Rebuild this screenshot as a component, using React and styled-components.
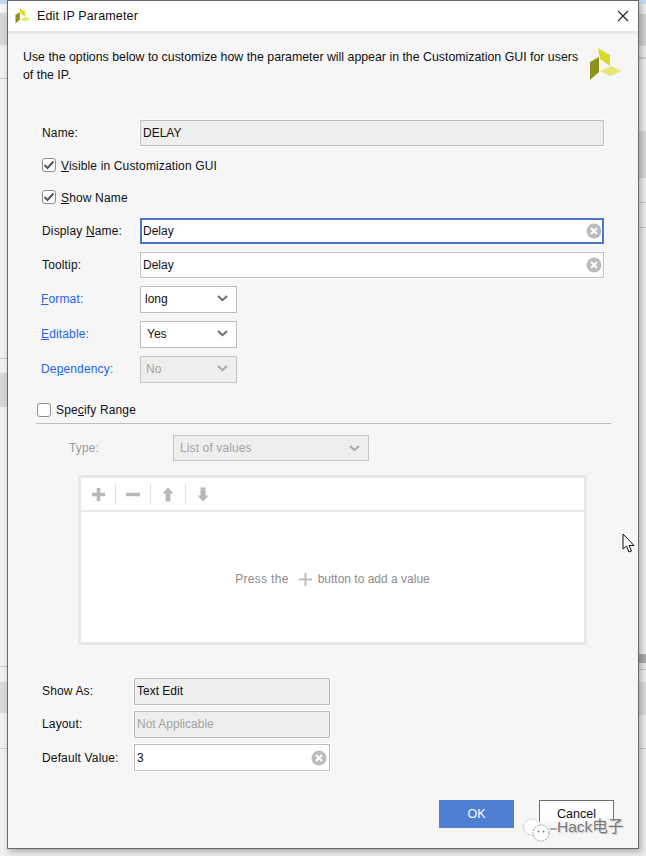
import React from 'react'
import styled, { createGlobalStyle } from 'styled-components'

const Global = createGlobalStyle`
  html, body { margin: 0; padding: 0; background: #efefef; }
  * { box-sizing: border-box; }
`

const Page = styled.div`
  position: relative;
  width: 646px;
  height: 856px;
  overflow: hidden;
  display: flex;
  font-family: "Liberation Sans", Arial, sans-serif;
  font-size: 12px;
  color: #111;
`
const LeftStrip = styled.div`
  width: 7px;
  background: linear-gradient(to bottom,
    #c9d6ee 0 4px, #f4f4f4 4px 13px, #d6d6d6 13px 45px, #f0f0f0 45px 78px, #cfcfcf 78px 79px,
    #f0f0f0 79px 358px, #cfcfcf 358px 359px, #f0f0f0 359px 373px, #d6d6d6 373px 407px,
    #f0f0f0 407px 666px, #cfcfcf 666px 667px, #f0f0f0 667px 682px, #d8d8d8 682px 713px,
    #f0f0f0 713px 748px, #cfcfcf 748px 749px, #f0f0f0 749px 856px);
`
const RightStrip = styled.div`
  flex: 1;
  background: linear-gradient(to bottom,
    #c9d6ee 0 4px, #ececec 4px 14px, #d0d0d0 14px 46px, #e8e8e8 46px 57px, #cfcfcf 57px 59px,
    #ececec 59px 131px, #d4d4d4 131px 178px, #ececec 178px 202px, #c8c8c8 202px 203px,
    #ececec 203px 227px, #c8c8c8 227px 228px, #ececec 228px 654px, #ababab 654px 663px,
    #e8e8e8 663px 669px, #c4c4c4 669px 670px, #ececec 670px 682px, #d8d8d8 682px 715px,
    #ececec 715px 748px, #c8c8c8 748px 749px, #ececec 749px 856px);
`
const Dialog = styled.div`
  width: 632px;
  height: 849px;
  background: #f6f6f6;
  border: 1px solid #6a6a6a;
  box-shadow: 2px 3px 6px rgba(0, 0, 0, 0.28);
  display: flex;
  flex-direction: column;
  position: relative;
`
const TitleBar = styled.div`
  height: 33px;
  flex-shrink: 0;
  background: #fff;
  border-bottom: 3px solid #e8e8e8;
  display: flex;
  align-items: center;
  justify-content: space-between;
  padding: 0 9px 0 7px;
  font-size: 12.5px;
  letter-spacing: 0.15px;
`
const TitleLeft = styled.div`
  display: flex;
  align-items: center;
  gap: 6px;
`
const Intro = styled.div`
  height: 86px;
  flex-shrink: 0;
  display: flex;
  justify-content: space-between;
  align-items: flex-start;
  padding: 14px 16px 0 15px;
`
const IntroText = styled.p`
  margin: 0;
  width: 565px;
  font-size: 12.35px;
  line-height: 18px;
`
const Form = styled.div`
  padding-left: 34px;
  display: flex;
  flex-direction: column;
`
const Row = styled.div`
  display: flex;
  align-items: center;
  margin-top: ${p => p.$top || 0}px;
`
const Label = styled.div`
  width: ${p => p.$w || 98}px;
  flex-shrink: 0;
  white-space: nowrap;
  color: ${p => p.$disabled ? '#9a9a9a' : p.$link ? '#2463e6' : '#111'};
  margin-left: ${p => p.$link ? -1 : 0}px;
  padding-bottom: ${p => p.$lift ? 2 : 0}px;
  font-size: 12px;
  letter-spacing: 0.15px;
`
const Field = styled.div`
  width: ${p => p.$w}px;
  height: ${p => p.$h || 26}px;
  display: flex;
  align-items: center;
  padding: 0 3px ${p => p.$lift ? 2 : 0}px ${p => p.$focus ? 1 : 2}px;
  background: ${p => p.$off ? '#eeeeee' : '#fff'};
  color: ${p => p.$dim ? '#a3a3a3' : '#111'};
  border: ${p => p.$focus ? '2px solid #4a78c8' : '1px solid #bdbdbd'};
  outline: ${p => p.$focus ? 'none' : '1px solid #fff'};
  font-size: 12px;
`
const ClearSlot = styled.span`
  margin-left: auto;
  display: flex;
  margin-right: ${p => p.$nudge || 0}px;
`
const Select = styled.div`
  width: ${p => p.$w}px;
  height: ${p => p.$h || 27}px;
  display: flex;
  align-items: center;
  justify-content: space-between;
  padding: 0 8px ${p => p.$h ? 0 : 2}px ${p => p.$pad || 5}px;
  background: ${p => p.$off ? '#eeeeee' : '#fff'};
  color: ${p => p.$off ? '#a3a3a3' : '#111'};
  border: 1px solid ${p => p.$off ? '#c4c4c4' : '#bdbdbd'};
  font-size: 12px;
  letter-spacing: ${p => p.$spaced ? 0.12 : 0}px;
`
const CheckRow = styled.div`
  display: flex;
  align-items: center;
  gap: 5px;
  height: 16px;
  margin-top: ${p => p.$top || 0}px;
  margin-left: ${p => p.$indent || 0}px;
  font-size: 12px;
  letter-spacing: 0.15px;
`
const CheckText = styled.span`
  padding-top: ${p => p.$drop ? 2 : 0}px;
`
const Box = styled.span`
  width: 14px;
  height: 14px;
  background: #fff;
  border: 1px solid #8d8d8d;
  border-radius: 3px;
  display: flex;
  align-items: center;
  justify-content: center;
`
const Divider = styled.div`
  width: 575px;
  height: 1px;
  background: #bdbdbd;
  margin: 5px 0 0 28px;
`
const RangeBlock = styled.div`
  padding-left: 61px;
`
const ValueTable = styled.div`
  width: 509px;
  height: 170px;
  margin: 14px 0 0 9px;
  border: 3px solid #e8e8e8;
  background: #fff;
  display: flex;
  flex-direction: column;
`
const Toolbar = styled.div`
  height: 34px;
  flex-shrink: 0;
  border-bottom: 2px solid #e8e8e8;
  display: flex;
  align-items: center;
`
const ToolSlot = styled.span`
  width: 35px;
  height: 20px;
  display: flex;
  align-items: center;
  justify-content: center;
  padding-right: ${p => p.$last ? 2 : 0}px;
  border-right: ${p => p.$last ? 'none' : '1px solid #dcdcdc'};
`
const Empty = styled.div`
  flex: 1;
  display: flex;
  align-items: center;
  justify-content: center;
  gap: 9px;
  padding-top: 4px;
  color: #8c8c8c;
  font-size: 12px;
`
const PressText = styled.span`
  letter-spacing: 0.3px;
`
const HintPlus = styled.span`
  display: flex;
  margin-right: -4px;
`
const Bottom = styled.div`
  margin: 33px 0 0 34px;
  display: flex;
  flex-direction: column;
  gap: 6px;
`
const Footer = styled.div`
  display: flex;
  justify-content: flex-end;
  gap: 25px;
  margin: 29px 24px 0 0;
`
const Button = styled.div`
  width: 75px;
  height: 28px;
  display: flex;
  align-items: center;
  justify-content: center;
  background: ${p => p.$primary ? '#4f7fd2' : '#fff'};
  color: ${p => p.$primary ? '#fff' : '#111'};
  border: ${p => p.$primary ? 'none' : '1px solid #6f6f6f'};
  font-size: 12.5px;
`
const Watermark = styled.div`
  position: absolute;
  left: 523px;
  top: 817px;
  width: 106px;
  height: 25px;
  display: flex;
  align-items: center;
  background: linear-gradient(to bottom, transparent 0 4px, #f6f6f6 5px);
  color: #777;
  font-family: "Liberation Sans", "Noto Sans CJK SC", sans-serif;
  font-size: 15.5px;
  line-height: 18px;
  white-space: nowrap;
  text-shadow: 0 0 2px #fff, 1px 1px 1px #bbb;
`
const WaterText = styled.span`
  padding-bottom: 5px;
`
const Cursor = styled.svg`
  position: absolute;
  left: 622px;
  top: 533px;
`

const Logo = ({ size }) => (
  <svg width={size} height={size} viewBox="0 0 33 33">
    <polygon points="9,0 21,7 21,18 11,11" fill="#d6dc2e" />
    <polygon points="1,14 10,9 10,24 1,32" fill="#8f9216" />
    <polygon points="22.5,18 32.5,23 21,28 11,23" fill="#e4e772" />
  </svg>
)
const Close = () => (
  <svg width="12" height="12" viewBox="0 0 12 12">
    <path d="M1 1L11 11M11 1L1 11" stroke="#222" strokeWidth="1.1" fill="none" />
  </svg>
)
const Clear = () => (
  <svg width="16" height="16" viewBox="0 0 16 16">
    <circle cx="8" cy="8" r="7.5" fill="#bcbcbc" />
    <path d="M5 5L11 11M11 5L5 11" stroke="#fff" strokeWidth="2" fill="none" />
  </svg>
)
const Chevron = ({ off }) => (
  <svg width="11" height="7" viewBox="0 0 11 7">
    <path d="M1 1L5.5 5.2L10 1" stroke={off ? '#a8a8a8' : '#6e6e6e'} strokeWidth="2" fill="none" />
  </svg>
)
const Check = () => (
  <svg width="12" height="10" viewBox="0 0 12 10">
    <path d="M1.5 5L4.5 8L10.5 1.5" stroke="#555" strokeWidth="2" fill="none" />
  </svg>
)
const Plus = ({ color = '#b8b8b8', w = 3.5 }) => (
  <svg width="15" height="15" viewBox="0 0 15 15">
    <path d="M7.5 1V14M1 7.5H14" stroke={color} strokeWidth={w} fill="none" />
  </svg>
)
const Minus = () => (
  <svg width="15" height="15" viewBox="0 0 15 15">
    <path d="M0 7.5H14" stroke="#b8b8b8" strokeWidth="3.5" fill="none" />
  </svg>
)
const ArrowUp = () => (
  <svg width="12" height="15" viewBox="0 0 12 15">
    <path d="M6 0.5L11.5 6.5H8.5V14.5H3.5V6.5H0.5Z" fill="#b8b8b8" />
  </svg>
)
const ArrowDown = () => (
  <svg width="12" height="15" viewBox="0 0 12 15">
    <path d="M6 14.5L11.5 8.5H8.5V0.5H3.5V8.5H0.5Z" fill="#b8b8b8" />
  </svg>
)
const WeChat = () => (
  <svg width="34" height="24" viewBox="0 0 34 24">
    <ellipse cx="9" cy="9" rx="8.5" ry="8" fill="#fff" stroke="#aaa" strokeWidth="0.7" strokeDasharray="2 1" />
    <ellipse cx="18" cy="15" rx="8" ry="8" fill="#fff" stroke="#888" strokeWidth="0.8" strokeDasharray="2 1" />
    <circle cx="15.5" cy="13.5" r="0.9" fill="#777" />
    <circle cx="20.5" cy="13.5" r="0.9" fill="#777" />
    <path d="M27 11H34" stroke="#777" strokeWidth="1.2" />
  </svg>
)

const App = () => (
  <Page>
    <Global />
    <LeftStrip />
    <Dialog>
      <TitleBar>
        <TitleLeft>
          <Logo size={16} />
          <span>Edit IP Parameter</span>
        </TitleLeft>
        <Close />
      </TitleBar>
      <Intro>
        <IntroText>Use the options below to customize how the parameter will appear in the Customization GUI for users of the IP.</IntroText>
        <Logo size={33} />
      </Intro>
      <Form>
        <Row>
          <Label>Name:</Label>
          <Field $w={464} $off>DELAY</Field>
        </Row>
        <CheckRow $top={11}>
          <Box><Check /></Box>
          <CheckText $drop><u>V</u>isible in Customization GUI</CheckText>
        </CheckRow>
        <CheckRow $top={16}>
          <Box><Check /></Box>
          <CheckText $drop><u>S</u>how Name</CheckText>
        </CheckRow>
        <Row $top={13}>
          <Label>Display <u>N</u>ame:</Label>
          <Field $w={464} $focus>Delay<ClearSlot $nudge={-3}><Clear /></ClearSlot></Field>
        </Row>
        <Row $top={8}>
          <Label>Tooltip:</Label>
          <Field $w={464}>Delay<ClearSlot $nudge={-2}><Clear /></ClearSlot></Field>
        </Row>
        <Row $top={8}>
          <Label $link $lift $w={99}><u>F</u>ormat:</Label>
          <Select $w={97} $pad={4}>long<Chevron /></Select>
        </Row>
        <Row $top={8}>
          <Label $link $lift $w={99}><u>E</u>ditable:</Label>
          <Select $w={97} $pad={6}>Yes<Chevron /></Select>
        </Row>
        <Row $top={8}>
          <Label $link $lift $w={99}>De<u>p</u>endency:</Label>
          <Select $w={97} $off>No<Chevron off /></Select>
        </Row>
      </Form>
      <CheckRow $top={19} $indent={29}>
        <Box />
        <CheckText>Spe<u>c</u>ify Range</CheckText>
      </CheckRow>
      <Divider />
      <RangeBlock>
        <Row $top={11}>
          <Label $disabled $w={104}>Type:</Label>
          <Select $w={196} $h={26} $pad={6} $spaced $off>List of values<Chevron off /></Select>
        </Row>
        <ValueTable>
          <Toolbar>
            <ToolSlot><Plus /></ToolSlot>
            <ToolSlot><Minus /></ToolSlot>
            <ToolSlot><ArrowUp /></ToolSlot>
            <ToolSlot $last><ArrowDown /></ToolSlot>
          </Toolbar>
          <Empty>
            <PressText>Press the</PressText>
            <HintPlus><Plus color="#bdbdbd" w={2} /></HintPlus>
            <span>button to add a value</span>
          </Empty>
        </ValueTable>
      </RangeBlock>
      <Bottom>
        <Row>
          <Label $lift $w={92}>Show As:</Label>
          <Field $w={196} $h={27} $off $lift>Text Edit</Field>
        </Row>
        <Row>
          <Label $lift $w={92}>Layout:</Label>
          <Field $w={196} $h={27} $off $dim $lift>Not Applicable</Field>
        </Row>
        <Row>
          <Label $w={92}>Default Value:</Label>
          <Field $w={196} $h={27}>3<ClearSlot $nudge={-1}><Clear /></ClearSlot></Field>
        </Row>
      </Bottom>
      <Footer>
        <Button $primary>OK</Button>
        <Button>Cancel</Button>
      </Footer>
    </Dialog>
    <RightStrip />
    <Watermark>
      <WeChat />
      <WaterText>Hack电子</WaterText>
    </Watermark>
    <Cursor width="14" height="21" viewBox="0 0 14 21">
      <path d="M1 1V16L4.5 13L7 19L9.5 18L7 12.5H12Z" fill="#fff" stroke="#111" strokeWidth="1" />
    </Cursor>
  </Page>
)

export default App
